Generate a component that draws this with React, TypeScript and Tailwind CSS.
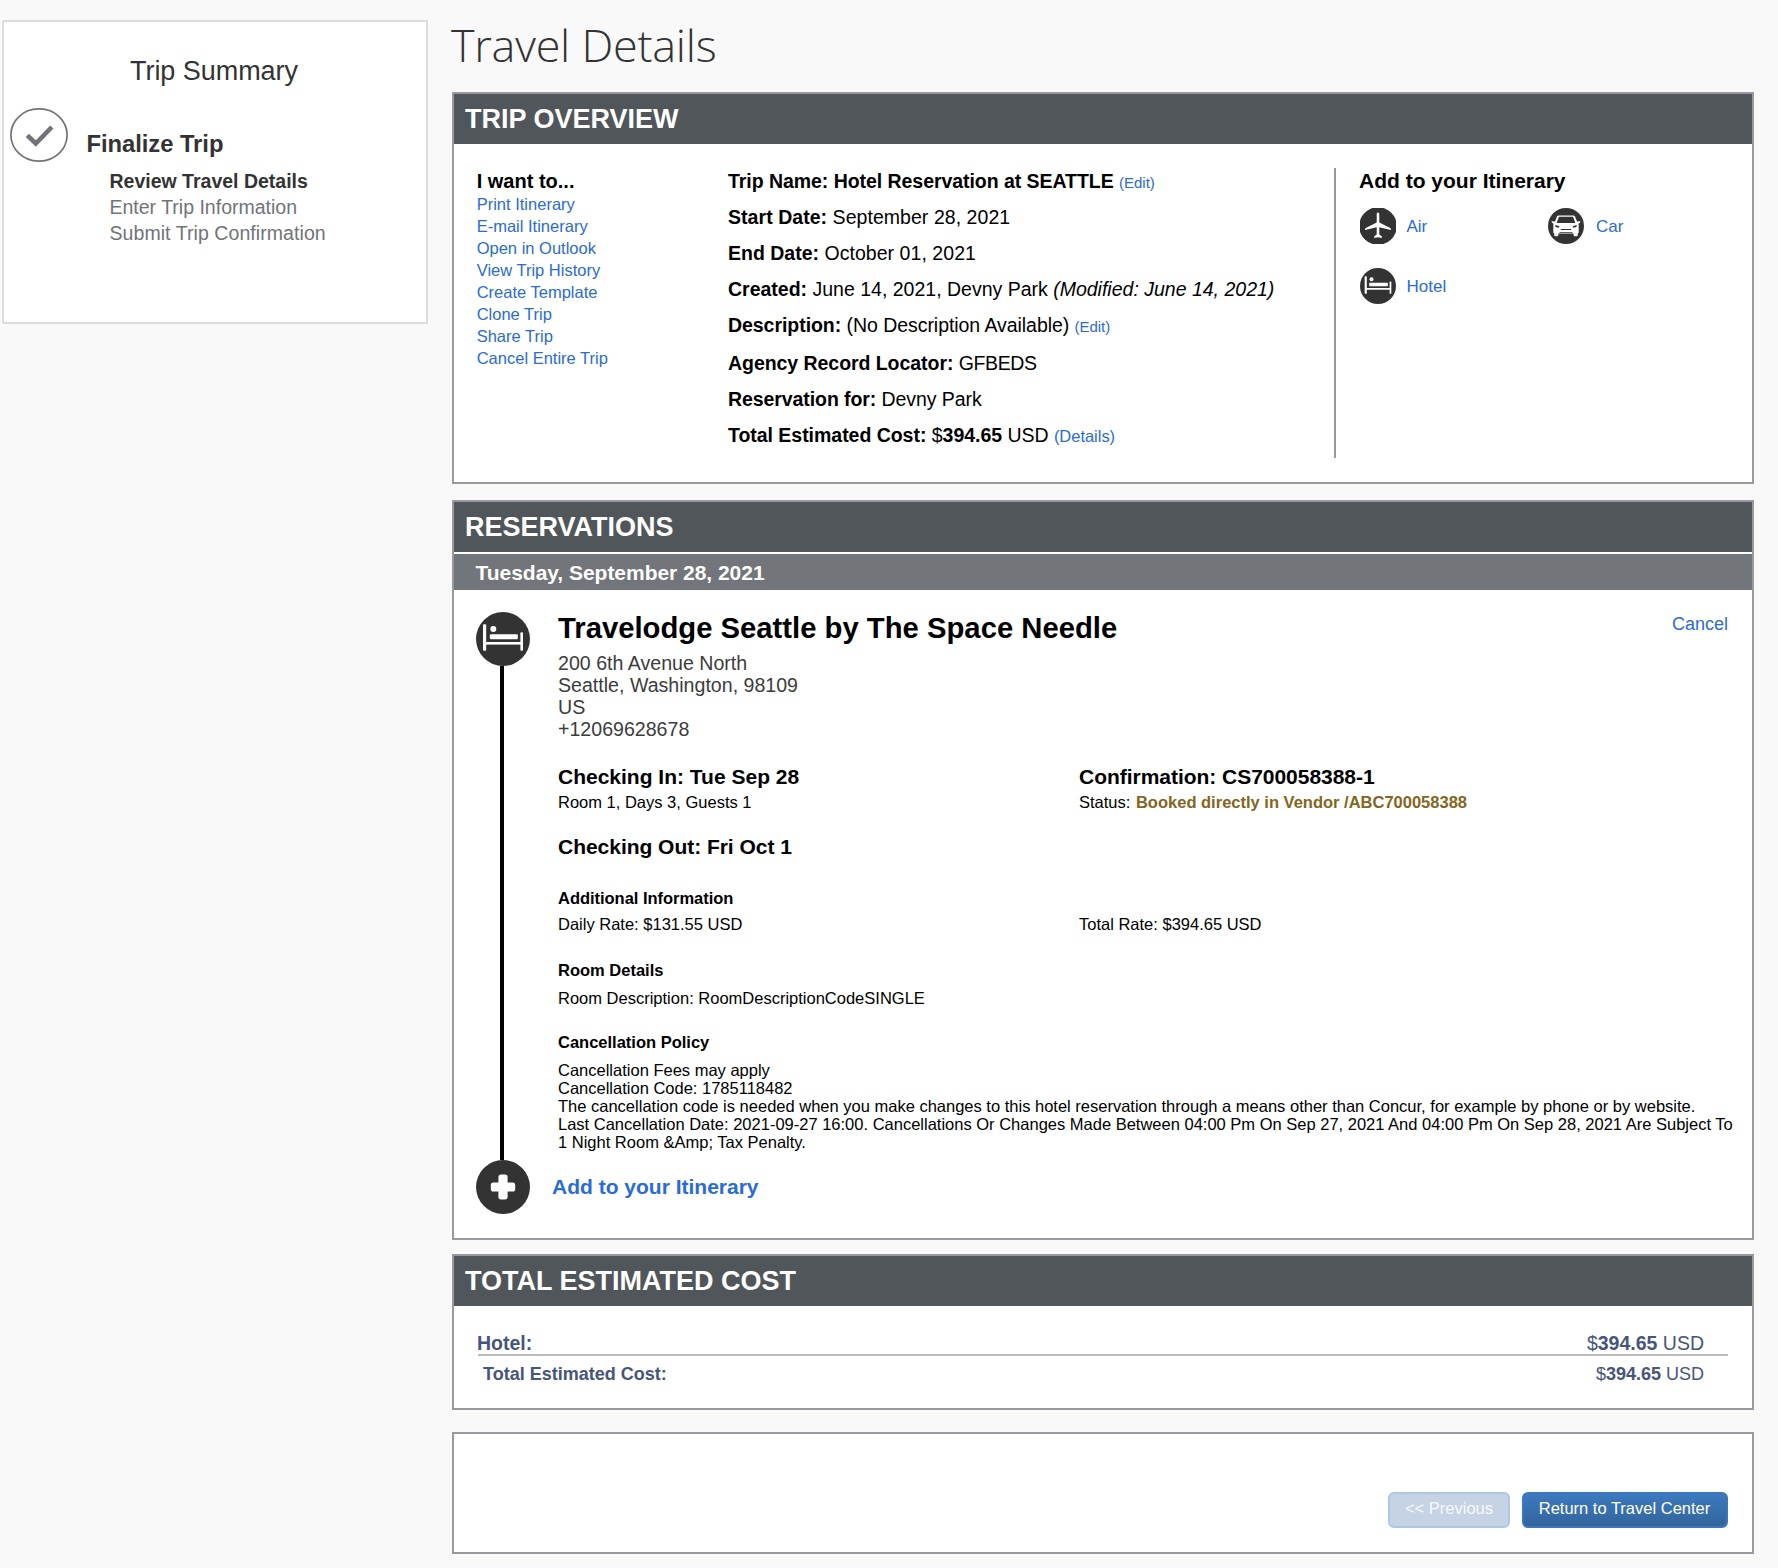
import React from "react";

const LINKS = [
  "Print Itinerary",
  "E-mail Itinerary",
  "Open in Outlook",
  "View Trip History",
  "Create Template",
  "Clone Trip",
  "Share Trip",
  "Cancel Entire Trip",
];

function BedIcon({ className }: { className: string }) {
  return (
    <svg viewBox="0 0 54 54" className={className}>
      <circle cx="27" cy="27" r="27" fill="#333333" />
      <g fill="#ffffff">
        <rect x="7" y="12.3" width="3.2" height="26.4" rx="1" />
        <rect x="44.4" y="20.3" width="2.6" height="18.4" rx="1" />
        <rect x="8" y="30" width="38" height="2.6" />
        <rect x="13.8" y="22.2" width="28" height="5" rx="1" />
        <circle cx="17.3" cy="17" r="3" />
      </g>
    </svg>
  );
}

function PlusIcon({ className }: { className: string }) {
  return (
    <svg viewBox="0 0 54 54" className={className}>
      <circle cx="27" cy="27" r="27" fill="#333333" />
      <rect x="22.4" y="14.6" width="9.2" height="24.8" rx="2.6" fill="#ffffff" />
      <rect x="14.8" y="22.4" width="24.4" height="9.2" rx="2.6" fill="#ffffff" />
    </svg>
  );
}

function PlaneIcon({ className }: { className: string }) {
  return (
    <svg viewBox="0 0 36 36" className={className}>
      <circle cx="18" cy="18" r="18.8" fill="#333333" />
      <path
        d="M18 4.600c.9 0 1.300.8 1.300 1.900v8.100l10.900 5.400c.7.500.9 1.100.7 1.900L19.300 19.200v7.400l2.500 1.700v1.600L18 29.200l-3.800.7v-1.600l2.500-1.700v-7.400L5.100 21.900c-.2-.8 0-1.400.7-1.900l10.900-5.400V6.500c0-1.100.4-1.900 1.300-1.900z"
        fill="#ffffff"
      />
    </svg>
  );
}

function CarIcon({ className }: { className: string }) {
  return (
    <svg viewBox="0 0 36 36" className={className}>
      <circle cx="18" cy="18" r="18" fill="#333333" />
      <path
        d="M10.600 7.400h14.800c.8 0 1.300.4 1.600 1.100l2 5 3-.3c.5 0 .6.5.4.9-.3.8-.9 1.300-1.800 1.400-.2.600.1 1.200.1 2v6.500c0 .8-.3 1.200-.9 1.500v1.600c0 .7-.4 1.100-1.100 1.100h-2c-.7 0-1.100-.4-1.100-1.100v-1.600H10.400v1.600c0 .7-.4 1.100-1.100 1.100h-2c-.7 0-1.100-.4-1.100-1.100v-1.600c-.6-.3-.9-.7-.9-1.500v-6.500c0-.8.3-1.400.1-2-.9-.1-1.500-.6-1.800-1.400-.2-.4-.1-.9.400-.9l3 .3 2-5c.3-.7.8-1.100 1.600-1.100z"
        fill="#ffffff"
      />
      <path d="M11 8.700h14l2.400 6.300H8.600z" fill="#333333" />
      <path d="M7.300 17l4.200 1.300-.8 1.500-3.200-.7zM28.700 17l-4.200 1.300.8 1.500 3.200-.7z" fill="#333333" />
      <path d="M12.500 20.900h11l-.6 1.200h-9.800zM11.500 23.900h13v.9h-13z" fill="#333333" />
    </svg>
  );
}

function PanelHeader({ children }: { children: React.ReactNode }) {
  return (
    <h2 className="h-[50px] bg-[#51565a] pl-[11px] text-[27px] font-bold leading-[50px] text-white">{children}</h2>
  );
}

function Link({ children, className = "" }: { children: React.ReactNode; className?: string }) {
  return (
    <a href="#" className={"text-[#2a6bd8] " + className}>
      {children}
    </a>
  );
}

function Sidebar() {
  return (
    <aside className="ml-[2px] mt-5 h-[304px] w-[426px] shrink-0 border-2 border-[#dddddd] bg-white text-[#333333]">
      <h2 className="mt-[30px] pr-[2px] text-center text-[27px] leading-[38px] tracking-[-0.05px]">Trip Summary</h2>
      <div className="mt-[18px] flex pl-[6px]">
        <svg viewBox="0 0 58 54" className="h-[54px] w-[58px] shrink-0">
          <rect x="0.9" y="0.9" width="56.2" height="52.2" rx="27.5" ry="26.1" fill="none" stroke="#717379" strokeWidth="1.7" />
          <path d="M17.300 27.300l8.500 8.200 16-16.500" fill="none" stroke="#717379" strokeWidth="4.6" />
        </svg>
        <div className="ml-[18.5px] pt-5">
          <div className="text-[23.8px] font-bold leading-[31px] tracking-[-0.05px]">Finalize Trip</div>
          <ul className="mt-[9px] pl-[23px] text-[19.5px] leading-[26px] text-[#717379]">
            <li className="font-bold text-[#333333]">Review Travel Details</li>
            <li>Enter Trip Information</li>
            <li className="tracking-[0.07px]">Submit Trip Confirmation</li>
          </ul>
        </div>
      </div>
    </aside>
  );
}

function TripOverview() {
  return (
    <section className="h-[392px] border-2 border-[#99999f] bg-white">
      <PanelHeader>TRIP OVERVIEW</PanelHeader>
      <div className="flex pt-6">
        <div className="w-[274px] shrink-0 pl-[22.7px] pt-[2px]">
          <h3 className="text-[20px] font-bold leading-[22px]">I want to...</h3>
          <ul className="mt-px text-[16.5px] leading-[22px]">
            {LINKS.map((l) => (
              <li key={l}>
                <Link>{l}</Link>
              </li>
            ))}
          </ul>
        </div>
        <div className="w-[606px] shrink-0 whitespace-nowrap pt-[2px] text-[19.5px] leading-[22px]">
          <div className="flex flex-col gap-[14px]">
            <p className="h-[22px]">
              <b className="tracking-[-0.05px]">Trip Name: Hotel Reservation at SEATTLE</b>{" "}
              <Link className="text-[15px]">(Edit)</Link>
            </p>
            <p className="h-[22px]">
              <b className="tracking-[0.05px]">Start Date:</b> <span className="tracking-[0.05px]">September 28, 2021</span>
            </p>
            <p className="h-[22px]">
              <b>End Date:</b> <span className="tracking-[0.05px]">October 01, 2021</span>
            </p>
            <p className="h-[22px]">
              <b>Created:</b> June 14, 2021, Devny Park <i>(Modified: June 14, 2021)</i>
            </p>
            <p className="mb-[2px] h-[22px] tracking-[-0.05px]">
              <b>Description:</b> (No Description Available){" "}
              <Link className="text-[15px]">(Edit)</Link>
            </p>
            <p className="h-[22px]">
              <b className="tracking-[-0.05px]">Agency Record Locator:</b>{" "}
              <span className="tracking-[-0.4px]">GFBEDS</span>
            </p>
            <p className="h-[22px] tracking-[-0.08px]">
              <b>Reservation for:</b> Devny Park
            </p>
            <p className="h-[22px] tracking-[-0.03px]">
              <b>Total Estimated Cost:</b> $<b>394.65</b> USD <Link className="text-[16.5px]">(Details)</Link>
            </p>
          </div>
        </div>
        <div className="h-[290px] w-[418px] border-l-2 border-[#99999f] pl-[23px]">
          <h3 className="text-[21px] font-bold leading-[25px]">Add to your Itinerary</h3>
          <div className="ml-px mt-[15px] grid grid-cols-[188px_188px] gap-y-6 text-[17px] leading-[37px]">
            <div className="flex h-9 gap-[10.5px]">
              <PlaneIcon className="h-9 w-9" />
              <Link>Air</Link>
            </div>
            <div className="flex h-9 gap-3">
              <CarIcon className="h-9 w-9" />
              <Link>Car</Link>
            </div>
            <div className="flex h-9 gap-[10.5px]">
              <BedIcon className="h-9 w-9" />
              <Link>Hotel</Link>
            </div>
          </div>
        </div>
      </div>
    </section>
  );
}

function Reservations() {
  return (
    <section className="mt-4 h-[740px] border-2 border-[#99999f] bg-white">
      <PanelHeader>RESERVATIONS</PanelHeader>
      <div className="mt-[2px] h-9 bg-[#72757a] pl-[21.5px] text-[21px] font-bold leading-[37px] tracking-[-0.03px] text-white">
        Tuesday, September 28, 2021
      </div>
      <div className="flex h-[570px] pl-[22px] pr-6 pt-[21px]">
        <div className="flex w-[54px] shrink-0 flex-col pt-px">
          <BedIcon className="h-[54px] w-[54px]" />
          <div className="ml-6 w-1 grow bg-black" />
        </div>
        <div className="ml-7 w-[1170px] shrink-0 whitespace-nowrap text-[16.5px] leading-[18px]">
          <div className="flex justify-between">
            <h3 className="text-[29.25px] font-bold leading-[34px]">Travelodge Seattle by The Space Needle</h3>
            <Link className="mt-px text-[18px] leading-6">Cancel</Link>
          </div>
          <address className="mt-[7px] text-[19.6px] not-italic leading-[22px] text-[#3c3c3c]">
            200 6th Avenue North
            <br />
            Seattle, Washington, 98109
            <br />
            US
            <br />
            +12069628678
          </address>
          <div className="mt-6 flex">
            <div className="w-[521px]">
              <h4 className="text-[21px] font-bold leading-[25px]">Checking In: Tue Sep 28</h4>
              <p className="mt-1">Room 1, Days 3, Guests 1</p>
            </div>
            <div>
              <h4 className="text-[21px] font-bold leading-[25px] tracking-[-0.03px]">Confirmation: CS700058388-1</h4>
              <p className="mt-1">
                Status: <b className="ml-px text-[#846521]">Booked directly in Vendor /ABC700058388</b>
              </p>
            </div>
          </div>
          <h4 className="mt-[23px] text-[21px] font-bold leading-[25px] tracking-[-0.03px]">Checking Out: Fri Oct 1</h4>
          <h5 className="mt-[30px] font-bold tracking-[-0.03px]">Additional Information</h5>
          <div className="mt-2 flex">
            <p className="w-[521px]">Daily Rate: $131.55 USD</p>
            <p>Total Rate: $394.65 USD</p>
          </div>
          <h5 className="mt-7 font-bold">Room Details</h5>
          <p className="mt-[10px]">Room Description: RoomDescriptionCodeSINGLE</p>
          <h5 className="mt-[26px] font-bold">Cancellation Policy</h5>
          <p className="mt-[10px]">
            Cancellation Fees may apply
            <br />
            Cancellation Code: 1785118482
            <br />
            The cancellation code is needed when you make changes to this hotel reservation through a means other than
            Concur, for example by phone or by website.
            <br />
            Last Cancellation Date: 2021-09-27 16:00. Cancellations Or Changes Made Between 04:00 Pm On Sep 27, 2021 And
            04:00 Pm On Sep 28, 2021 Are Subject To
            <br />1 Night Room &amp;Amp; Tax Penalty.
          </p>
        </div>
      </div>
      <div className="flex pl-[22px]">
        <PlusIcon className="h-[54px] w-[54px]" />
        <Link className="ml-[22px] text-[21px] font-bold leading-[54px]">Add to your Itinerary</Link>
      </div>
    </section>
  );
}

function TotalCost() {
  return (
    <section className="mt-[14px] h-[156px] border-2 border-[#99999f] bg-white">
      <PanelHeader>TOTAL ESTIMATED COST</PanelHeader>
      <div className="mx-6 pt-[26px] text-[#47557c]">
        <div className="flex justify-between border-b-2 border-[#bbbbbb] pr-6 text-[19.5px] leading-[22px]">
          <b className="-ml-px">Hotel:</b>
          <span>
            $<b>394.65</b> USD
          </span>
        </div>
        <div className="mt-[7px] flex justify-between pl-[5px] pr-6 text-[18px] leading-[22px]">
          <b>Total Estimated Cost:</b>
          <span>
            $<b>394.65</b> USD
          </span>
        </div>
      </div>
    </section>
  );
}

function Footer() {
  return (
    <section className="mt-[22px] flex h-[122px] justify-end gap-3 border-2 border-[#99999f] bg-white pr-6 pt-[58px] text-[16.5px] leading-[28px]">
      <button className="flex h-9 w-[122px] justify-center rounded-[6px] border-2 border-[#abc8e4] bg-[#c5d3e4] text-[#f6fafd]">
        &lt;&lt; Previous
      </button>
      <button className="flex h-9 w-[206px] justify-center rounded-[6px] border-2 border-[#3a77bd] bg-gradient-to-b from-[#3c79bf] to-[#33659c] pr-px text-white">
        Return to Travel Center
      </button>
    </section>
  );
}

export default function App() {
  return (
    <div className="flex h-[1568px] w-[1778px] overflow-hidden bg-[#f9f9f9] font-['Liberation_Sans',Arial,sans-serif] text-black">
      <Sidebar />
      <main className="ml-6 w-[1302px] shrink-0 pt-[14px]">
        <h1 className="-ml-px mb-[17px] font-['Open_Sans',sans-serif] text-[45px] font-light leading-[61px] tracking-[-0.25px] text-[#333333]">
          Travel Details
        </h1>
        <TripOverview />
        <Reservations />
        <TotalCost />
        <Footer />
      </main>
    </div>
  );
}
